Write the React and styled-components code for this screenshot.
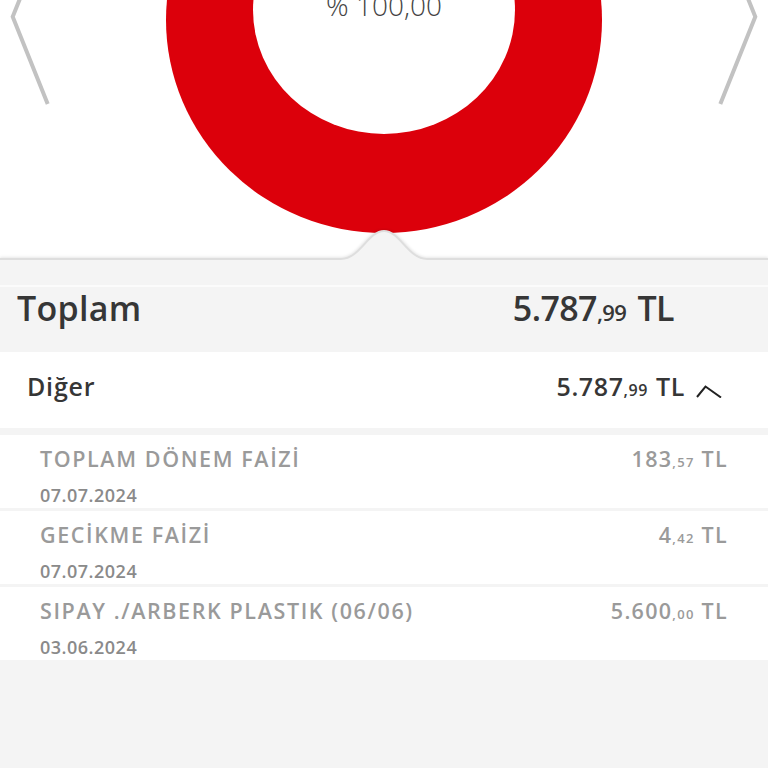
import React from "react";
import styled, { createGlobalStyle } from "styled-components";

const Global = createGlobalStyle`
  html, body { margin: 0; padding: 0; background: #f4f4f4; }
  body { font-family: "Open Sans", "Liberation Sans", sans-serif; }
  * { box-sizing: border-box; }
`;

const Page = styled.div`
  width: 768px;
  min-height: 768px;
  background: #f4f4f4;
  display: flex;
  flex-direction: column;
`;

const ChartSection = styled.section`
  position: relative;
  height: 262px;
  background: #ffffff;
  overflow: hidden;
`;

const ChartRow = styled.div`
  display: flex;
  justify-content: space-between;
  align-items: flex-start;
  height: 240px;
`;

const NavButton = styled.button`
  width: 60px;
  height: 110px;
  padding: 0;
  border: 0;
  background: transparent;
  display: block;
  svg { display: block; }
`;

const Pointer = styled.svg`
  position: absolute;
  left: 0;
  bottom: 0;
  width: 768px;
  height: 34px;
  display: block;
`;

const Spacer = styled.div`
  height: 23px;
`;

const TotalRow = styled.div`
  height: 67px;
  border-top: 2px solid #fbfbfb;
  background: #f4f4f4;
  display: flex;
  justify-content: space-between;
  align-items: flex-start;
  padding: 1px 94px 0 17px;
  color: #363636;
`;

const TotalLabel = styled.span`
  font-size: 34px;
  line-height: 40px;
  font-weight: 600;
  letter-spacing: 0.3px;
`;

const Amount = styled.span`
  font-size: ${(p) => p.$size}px;
  line-height: ${(p) => p.$lh}px;
  font-weight: 600;
  letter-spacing: ${(p) => p.$ls}px;
  color: ${(p) => p.$color};
  white-space: nowrap;
  small {
    font-size: ${(p) => p.$small}px;
    letter-spacing: ${(p) => p.$ls}px;
    margin-right: ${(p) => p.$gap}px;
  }
`;

const GroupRow = styled.div`
  height: 76px;
  background: #ffffff;
  display: flex;
  align-items: flex-start;
  justify-content: space-between;
  padding: 19px 46px 0 27px;
  color: #363636;
`;

const GroupLabel = styled.span`
  font-size: 25px;
  line-height: 30px;
  font-weight: 600;
  letter-spacing: 0.8px;
`;

const GroupRight = styled.div`
  display: flex;
  align-items: flex-start;
  gap: 11px;
  svg { display: block; margin-top: 14px; }
`;

const List = styled.div`
  margin-top: 7px;
  display: flex;
  flex-direction: column;
  gap: 3px;
`;

const Item = styled.div`
  height: 73px;
  background: #ffffff;
  padding: 11px 40px 0 40px;
  display: grid;
  grid-template-columns: 1fr auto;
  grid-template-rows: 26px 22px;
  row-gap: 12px;
`;

const ItemTitle = styled.span`
  font-size: 21.5px;
  line-height: 26px;
  font-weight: 600;
  letter-spacing: 1.6px;
  color: #9a9a9a;
  white-space: nowrap;
`;

const ItemDate = styled.span`
  grid-column: 1 / 2;
  font-size: 18px;
  line-height: 22px;
  font-weight: 600;
  letter-spacing: 0.5px;
  color: #8a8a8a;
`;

function Money({ whole, cents, size, small, lh, ls, gap, color }) {
  return (
    <Amount $size={size} $small={small} $lh={lh} $ls={ls} $gap={gap} $color={color}>
      {whole}
      <small>,{cents}</small> TL
    </Amount>
  );
}

const items = [
  { title: "TOPLAM DÖNEM FAİZİ", date: "07.07.2024", whole: "183", cents: "57" },
  { title: "GECİKME FAİZİ", date: "07.07.2024", whole: "4", cents: "42" },
  { title: "SIPAY ./ARBERK PLASTIK (06/06)", date: "03.06.2024", whole: "5.600", cents: "00" },
];

export default function App() {
  return (
    <Page>
      <Global />
      <ChartSection>
        <ChartRow>
          <NavButton aria-label="Önceki">
            <svg width="60" height="110" viewBox="0 0 60 110">
              <path d="M47.7 104 L12.7 16.7 L47.7 -70" fill="none" stroke="#c2c2c2" strokeWidth="4" />
            </svg>
          </NavButton>
          <svg width="448" height="240" viewBox="0 0 448 240">
            <ellipse cx="224" cy="20" rx="218" ry="213" fill="#dc000b" />
            <ellipse cx="224" cy="10" rx="131" ry="124" fill="#ffffff" />
            <text
              x="224"
              y="16"
              textAnchor="middle"
              fontFamily="Open Sans, Liberation Sans, sans-serif"
              fontWeight="300"
              fontSize="28"
              fill="#444444"
            >
              % 100,00
            </text>
          </svg>
          <NavButton aria-label="Sonraki">
            <svg width="60" height="110" viewBox="0 0 60 110">
              <path d="M12.3 104 L47.3 16.7 L12.3 -70" fill="none" stroke="#c2c2c2" strokeWidth="4" />
            </svg>
          </NavButton>
        </ChartRow>
        <Pointer viewBox="0 0 768 34">
          <defs>
            <filter id="soft" x="-5%" y="-100%" width="110%" height="300%">
              <feGaussianBlur stdDeviation="1.5" />
            </filter>
          </defs>
          <path
            d="M0 31 H341 C360 31 368 3 384 3 C400 3 408 31 427 31 H768"
            fill="none"
            stroke="rgba(0,0,0,0.12)"
            strokeWidth="3"
            filter="url(#soft)"
          />
          <path d="M0 31 H341 C360 31 368 3 384 3 C400 3 408 31 427 31 H768 V34 H0 Z" fill="#f4f4f4" />
          <path
            d="M0 31 H341 C360 31 368 3 384 3 C400 3 408 31 427 31 H768"
            fill="none"
            stroke="#dedede"
            strokeWidth="2"
          />
        </Pointer>
      </ChartSection>
      <Spacer />
      <TotalRow>
        <TotalLabel>Toplam</TotalLabel>
        <Money whole="5.787" cents="99" size={34} small={22} lh={40} ls={-0.6} gap={3} color="#363636" />
      </TotalRow>
      <GroupRow>
        <GroupLabel>Diğer</GroupLabel>
        <GroupRight>
          <Money whole="5.787" cents="99" size={25} small={16} lh={30} ls={0.6} gap={1} color="#363636" />
          <svg width="26" height="13" viewBox="0 0 26 13">
            <path d="M1 12 L9.5 1.5 L25 12.5" fill="none" stroke="#222222" strokeWidth="2" />
          </svg>
        </GroupRight>
      </GroupRow>
      <List>
        {items.map((it) => (
          <Item key={it.title}>
            <ItemTitle>{it.title}</ItemTitle>
            <Money whole={it.whole} cents={it.cents} size={21.5} small={13} lh={26} ls={1.3} gap={0} color="#9a9a9a" />
            <ItemDate>{it.date}</ItemDate>
          </Item>
        ))}
      </List>
    </Page>
  );
}
